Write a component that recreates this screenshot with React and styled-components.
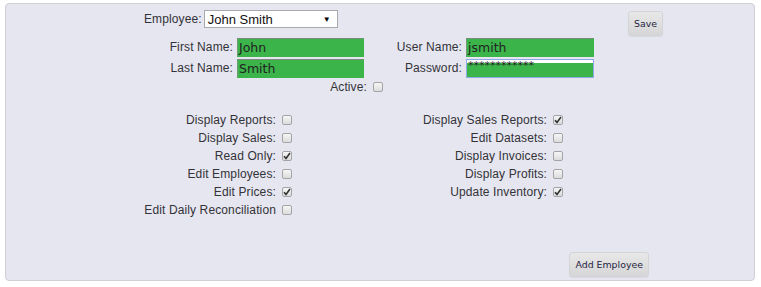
import React from "react";
import styled, { createGlobalStyle } from "styled-components";

const GlobalStyle = createGlobalStyle`
  body {
    margin: 0;
    background: #ffffff;
    font-family: "Liberation Sans", Arial, sans-serif;
  }
`;

const Panel = styled.div`
  box-sizing: border-box;
  margin: 3px 0 0 5px;
  width: 750px;
  height: 278px;
  background-color: #e6e6f0;
  border: 1px solid #cfcfd6;
  border-radius: 4px;
  padding: 6px 0 3px 0;
  display: flex;
  flex-direction: column;
`;

const EmployeeRow = styled.div`
  display: flex;
  align-items: flex-start;
  height: 26px;
  padding-left: 138px;
  padding-right: 91px;
`;

const Label = styled.span`
  font-size: 12px;
  letter-spacing: 0.12px;
  color: #333338;
  line-height: ${(p) => p.$lh || 18}px;
  white-space: nowrap;
  text-align: right;
`;

const Select = styled.div`
  box-sizing: border-box;
  width: 134px;
  height: 18px;
  margin-left: 2px;
  background: #ffffff;
  border: 1px solid #a9a9b0;
  display: flex;
  align-items: center;
  justify-content: space-between;
  padding: 0 6px 0 3px;
  font-size: 13px;
  color: #111;
`;

const Arrow = styled.span`
  font-size: 8px;
  color: #000;
`;

const Spacer = styled.div`
  flex: 1;
`;

const Button = styled.button`
  box-sizing: border-box;
  height: 25px;
  margin-top: ${(p) => p.$top || 0}px;
  padding: 0 5px;
  font-family: "DejaVu Sans", Verdana, sans-serif;
  font-size: 9.4px;
  color: #1f2340;
  background: linear-gradient(#e8e8e8, #d6d6d8);
  border: 1px solid #d4d4d8;
  border-radius: 3px;
  box-shadow: 0 1px 1px rgba(0, 0, 0, 0.06);
`;

const Credentials = styled.div`
  display: grid;
  grid-template-columns: 100px 127px 94px 128px;
  grid-auto-rows: 19px;
  column-gap: 4px;
  row-gap: 2px;
  margin-left: 127px;
  margin-top: 2px;
`;

const Field = styled.div`
  box-sizing: border-box;
  height: 19px;
  background: ${(p) =>
    p.$focus ? "linear-gradient(#ffffff 0 3px, #3bb54a 3px)" : "#3bb54a"};
  border: 1px solid ${(p) => (p.$focus ? "#8cabe6" : "#3bb54a")};
  border-top-color: ${(p) => (p.$focus ? "#8cabe6" : "#7a8a7c")};
  border-left-color: ${(p) => (p.$focus ? "#8cabe6" : "#6f9a73")};
  font-family: "DejaVu Sans", Tahoma, sans-serif;
  font-size: ${(p) => (p.$focus ? 11 : 12.5)}px;
  line-height: ${(p) => (p.$focus ? 11 : 17)}px;
  color: #222;
  padding-left: 1px;
  overflow: hidden;
  white-space: nowrap;
`;

const ActiveRow = styled.div`
  display: flex;
  justify-content: flex-end;
  align-items: center;
  gap: 6px;
  width: 377px;
  height: 14px;
  margin-top: 2px;
`;

const Permissions = styled.div`
  display: grid;
  grid-template-columns: 140px 10px 249px 10px;
  grid-auto-rows: 18px;
  column-gap: 6px;
  align-items: center;
  margin-left: 130px;
  margin-top: 17px;
`;

const Box = styled.span`
  box-sizing: border-box;
  display: inline-flex;
  align-items: center;
  justify-content: center;
  width: 10px;
  height: 10px;
  border: 1px solid #a4a4a8;
  border-radius: 2px;
  background: linear-gradient(#f6f6f6, #dcdcdc);
`;

const Footer = styled.div`
  margin-top: auto;
  display: flex;
  justify-content: flex-end;
  padding-right: 105px;
`;

const Check = ({ on }) => (
  <Box>
    {on && (
      <svg width="8" height="8" viewBox="0 0 8 8">
        <path d="M1 4.2 L3 6.4 L7 1" fill="none" stroke="#333" strokeWidth="1.6" />
      </svg>
    )}
  </Box>
);

const left = [
  ["Display Reports:", false],
  ["Display Sales:", false],
  ["Read Only:", true],
  ["Edit Employees:", false],
  ["Edit Prices:", true],
  ["Edit Daily Reconciliation", false],
];

const right = [
  ["Display Sales Reports:", true],
  ["Edit Datasets:", false],
  ["Display Invoices:", false],
  ["Display Profits:", false],
  ["Update Inventory:", true],
];

export default function App() {
  return (
    <>
      <GlobalStyle />
      <Panel>
        <EmployeeRow>
          <Label>Employee:</Label>
          <Select>
            <span>John Smith</span>
            <Arrow>▼</Arrow>
          </Select>
          <Spacer />
          <Button $top={1}>Save</Button>
        </EmployeeRow>
        <Credentials>
          <Label $lh={19}>First Name:</Label>
          <Field>John</Field>
          <Label $lh={19}>User Name:</Label>
          <Field>jsmith</Field>
          <Label $lh={19}>Last Name:</Label>
          <Field>Smith</Field>
          <Label $lh={19}>Password:</Label>
          <Field $focus>************</Field>
        </Credentials>
        <ActiveRow>
          <Label $lh={14}>Active:</Label>
          <Check on={false} />
        </ActiveRow>
        <Permissions>
          {left.map(([name, on], i) => (
            <React.Fragment key={name}>
              <Label>{name}</Label>
              <Check on={on} />
              {right[i] ? (
                <>
                  <Label>{right[i][0]}</Label>
                  <Check on={right[i][1]} />
                </>
              ) : (
                <>
                  <span />
                  <span />
                </>
              )}
            </React.Fragment>
          ))}
        </Permissions>
        <Footer>
          <Button>Add Employee</Button>
        </Footer>
      </Panel>
    </>
  );
}
